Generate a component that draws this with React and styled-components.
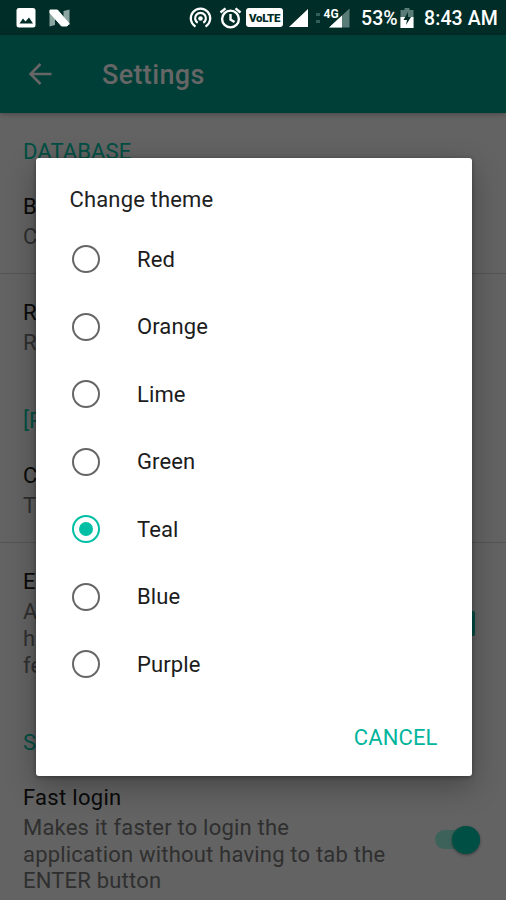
import styled, { createGlobalStyle } from 'styled-components';

const GlobalStyle = createGlobalStyle`
	body {
		margin: 0;
		background: #636363;
		font-family: Roboto, 'Liberation Sans', sans-serif;
	}
`

const Screen = styled.div`
	position: relative;
	width: 506px;
	height: 900px;
	overflow: hidden;
	background: #636363;
`

const StatusBar = styled.div`
	display: flex;
	align-items: center;
	height: 35px;
	box-sizing: border-box;
	padding: 0 8px 0 16px;
	background: #002d27;
	color: #fff;
`

const StatusIcon = styled.svg`
	display: block;
	flex: none;
	margin-left: ${props => props.$gap || 0}px;
`

const StatusText = styled.span`
	flex: none;
	width: ${props => props.$width}px;
	margin-left: ${props => props.$gap}px;
	padding-top: 2px;
	font-size: 19.5px;
	font-weight: 500;
	line-height: 33px;
	letter-spacing: 0.1px;
	white-space: nowrap;
`

const Volte = styled.span`
	flex: none;
	width: 37px;
	height: 19px;
	margin-left: 4px;
	border-radius: 3px;
	background: #fff;
	color: #002d27;
	font-size: 11.5px;
	font-weight: 900;
	line-height: 20px;
	letter-spacing: -0.3px;
	text-align: center;
`

const Dots = styled.span`
	flex: none;
	width: 4px;
	height: 10px;
	margin: 1px 0 0 8px;
	border: solid #2f5f58;
	border-width: 3px 0;
	box-sizing: border-box;
`

const AppBar = styled.header`
	display: flex;
	align-items: center;
	height: 78px;
	padding-left: 28px;
	background: #003f37;
	color: #666;
	box-shadow: 0 1px 5px rgba(0, 0, 0, 0.3);
`

const Title = styled.h1`
	margin: 2px 0 0 50px;
	font-size: 27px;
	font-weight: 500;
	letter-spacing: 0.35px;
`

const Category = styled.h2`
	height: 27px;
	margin: 0;
	padding: ${props => props.$first ? '24.5px 23px 3px' : '27.5px 23px 2.5px'};
	color: #004f43;
	font-size: 22px;
	font-weight: 400;
	line-height: 27px;
	letter-spacing: 0.1px;
`

const Preference = styled.div`
	display: flex;
	align-items: center;
	justify-content: space-between;
	padding: 25.5px ${props => props.$end || 24}px 22.4px 23px;
	border-bottom: ${props => props.$divider ? '1px solid #545454' : 'none'};
`

const Label = styled.div`
	margin-bottom: 4px;
	color: #0a0a0a;
	font-size: 22px;
	line-height: 27px;
	letter-spacing: 0.3px;
`

const Summary = styled.div`
	color: #2f2f2f;
	font-size: 22px;
	line-height: 26.6px;
	letter-spacing: 0.2px;
	white-space: pre-line;
`

const Checkbox = styled.span`
	width: 25px;
	height: 25px;
	border-radius: 2px;
	background: #004f45;
`

const Switch = styled.span`
	display: flex;
	align-items: center;
	justify-content: flex-end;
	width: 45px;
	height: 19px;
	border-radius: 10px;
	background: #3d625a;
`

const Thumb = styled.span`
	width: 28px;
	height: 28px;
	border-radius: 50%;
	background: #004f45;
	box-shadow: 0 1px 3px rgba(0, 0, 0, 0.4);
`

const Dialog = styled.div`
	position: absolute;
	top: 157.5px;
	left: 35.5px;
	width: 436px;
	height: 618.5px;
	box-sizing: border-box;
	padding: 27px 34px 0;
	border-radius: 3px;
	background: #fff;
	box-shadow: 0 10px 30px rgba(0, 0, 0, 0.3), 0 1px 4px rgba(0, 0, 0, 0.35);
`

const DialogTitle = styled.h3`
	margin: 0 0 12px;
	color: #212121;
	font-size: 22px;
	font-weight: 400;
	line-height: 30px;
	letter-spacing: 0.15px;
`

const Option = styled.div`
	display: flex;
	align-items: center;
	height: 67.5px;
	margin-top: ${props => props.$first ? '-1px' : 0};
	color: #1c1c1c;
	font-size: 22px;
	letter-spacing: 0.1px;
`

const Radio = styled.span`
	display: flex;
	align-items: center;
	justify-content: center;
	width: 28px;
	height: 28px;
	box-sizing: border-box;
	margin: 0 37px 0 2.5px;
	border: 2.4px solid ${props => props.$checked ? '#00bfa5' : '#666'};
	border-radius: 50%;

	&::after {
		content: '';
		width: 14px;
		height: 14px;
		border-radius: 50%;
		background: ${props => props.$checked ? '#00bfa5' : 'transparent'};
	}
`

const Actions = styled.div`
	display: flex;
	justify-content: flex-end;
	margin-top: 26px;
`

const Cancel = styled.button`
	padding: 0;
	border: 0;
	background: none;
	color: #00b59c;
	font-family: inherit;
	font-size: 22px;
	line-height: 28px;
	letter-spacing: 0.1px;
`

const themes = ['Red', 'Orange', 'Lime', 'Green', 'Teal', 'Blue', 'Purple'];

function Status() {
	return (
		<StatusBar>
			<StatusIcon width="20" height="20" viewBox="0 0 20 20">
				<rect x="0.5" width="19" height="19.5" rx="2.5" fill="#fff" />
				<path d="M3.5 15.5 7 10.5l2.5 3 3.5-4 4 6z" fill="#002d27" />
			</StatusIcon>
			<StatusIcon $gap={13} width="21" height="18" viewBox="0 0 21 18">
				<path d="M0.5 1.5H6V16l-5.5 1.5zM14.5 2l6-1.5V16h-6z" fill="#8ba5a1" />
				<path d="M1 1h7.5L20 14.5 18 17h-5.5L1 4z" fill="#fff" stroke="#fff" strokeLinejoin="round" />
			</StatusIcon>
			<StatusIcon $gap={119} width="23" height="22" viewBox="0 0 23 22" fill="none" stroke="#fff" strokeWidth="2.2">
				<path d="M6.5 19.6a9.7 9.7 0 1 1 10 0M8.7 15.8a5.4 5.4 0 1 1 5.6 0" />
				<circle cx="11.5" cy="11.5" r="2.3" fill="#fff" stroke="none" />
			</StatusIcon>
			<StatusIcon $gap={7} width="23" height="22" viewBox="0 0 23 22" fill="none" stroke="#fff" strokeWidth="2.4">
				<circle cx="11.5" cy="12" r="8.4" />
				<path d="M1.5 5.5 6.5 1.3M21.5 5.5l-5-4.2M11.5 7v5.5l4 2.5" />
			</StatusIcon>
			<Volte>VoLTE</Volte>
			<StatusIcon $gap={6} width="19" height="18" viewBox="0 0 19 18">
				<path d="M0 18 19 0v18z" fill="#fff" />
			</StatusIcon>
			<Dots />
			<StatusIcon $gap={3} width="27" height="20" viewBox="0 0 27 20">
				<path d="M6 19.5 26.5 0.5v19z" fill="#5a7c77" />
				<path d="M6 19.5 19 7.5v12z" fill="#fff" />
				<text x="0.5" y="9.5" fill="#fff" stroke="#002d27" strokeWidth="1.5" paintOrder="stroke" fontSize="12" fontWeight="700">4G</text>
			</StatusIcon>
			<StatusText $gap={11} $width={38}>53%</StatusText>
			<StatusIcon $gap={1} width="14" height="20" viewBox="0 0 14 20">
				<path d="M0.5 2h4V0h5v2h4v18h-13z" fill="#5a7c77" />
				<path d="M0.5 9h13v11h-13z" fill="#fff" />
				<path d="M8 4 3.5 12H7l-1 5 5-8H8z" fill="#002d27" />
			</StatusIcon>
			<StatusText $gap={10} $width={74}>8:43 AM</StatusText>
		</StatusBar>
	);
}

function App() {
	return (
		<Screen>
			<GlobalStyle />
			<Status />
			<AppBar>
				<svg width="24" height="24" viewBox="0 0 24 24" fill="none" stroke="#666" strokeWidth="2.6">
					<path d="M23.5 12H3M12.5 2l-10 10 10 10" />
				</svg>
				<Title>Settings</Title>
			</AppBar>
			<Category $first>DATABASE</Category>
			<Preference $divider>
				<div>
					<Label>B</Label>
					<Summary>C</Summary>
				</div>
			</Preference>
			<Preference>
				<div>
					<Label>R</Label>
					<Summary>R</Summary>
				</div>
			</Preference>
			<Category>[P</Category>
			<Preference $divider>
				<div>
					<Label>C</Label>
					<Summary>T</Summary>
				</div>
			</Preference>
			<Preference $end={31.5}>
				<div>
					<Label>E</Label>
					<Summary>{'A\nh\nfe'}</Summary>
				</div>
				<Checkbox />
			</Preference>
			<Category>S</Category>
			<Preference $end={26.5}>
				<div>
					<Label>Fast login</Label>
					<Summary>{'Makes it faster to login the\napplication without having to tab the\nENTER button'}</Summary>
				</div>
				<Switch>
					<Thumb />
				</Switch>
			</Preference>
			<Dialog>
				<DialogTitle>Change theme</DialogTitle>
				{themes.map((theme, i) => (
					<Option key={theme} $first={i === 0}>
						<Radio $checked={theme === 'Teal'} />
						{theme}
					</Option>
				))}
				<Actions>
					<Cancel>CANCEL</Cancel>
				</Actions>
			</Dialog>
		</Screen>
	);
}

export default App;
